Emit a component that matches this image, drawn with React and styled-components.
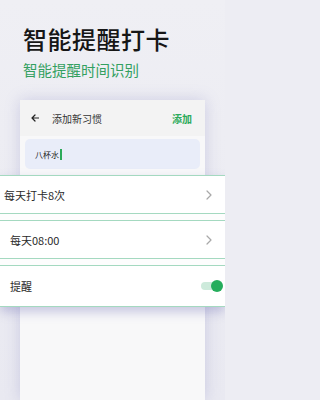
import React, { useState } from "react";
import styled, { createGlobalStyle } from "styled-components";

/* Base */
const GlobalStyle = createGlobalStyle`
  html, body {
    margin: 0;
    padding: 0;
    background: #ededf3;
  }
  body {
    font-family: "Noto Sans CJK SC", "Noto Sans", sans-serif;
  }
`;

const Page = styled.div`
  width: 225px;
  height: 400px;
  overflow: hidden;
  display: flex;
  flex-direction: column;
  background: linear-gradient(180deg, #efeff4 0%, #e9e9f1 100%);
`;

/* Hero text */
const Hero = styled.header`
  padding: 25px 0 0 23px;
`;

const Title = styled.h1`
  margin: 0;
  font-size: 24px;
  line-height: 28px;
  font-weight: 500;
  letter-spacing: 0.5px;
  color: #161616;
`;

const Subtitle = styled.p`
  margin: 8px 0 0;
  font-size: 14.5px;
  line-height: 18px;
  color: #33a060;
`;

/* Phone mock */
const Phone = styled.section`
  flex: 1;
  margin: 21px 20px 0;
  display: flex;
  flex-direction: column;
  background: #f8f8f9;
  box-shadow: 0 0 14px rgba(120, 120, 185, 0.28);
`;

const TopBar = styled.div`
  height: 36px;
  display: flex;
  align-items: center;
  padding: 0 13px 0 11px;
  background: #f3f3f3;
`;

const BarTitle = styled.span`
  flex: 1;
  margin-left: 13px;
  font-size: 10px;
  color: #333;
`;

const AddButton = styled.span`
  font-size: 10px;
  font-weight: 700;
  color: #2caa5a;
`;

const NameField = styled.div`
  height: 30px;
  margin: 3px 5px 0;
  padding: 0 10px;
  display: flex;
  align-items: center;
  border-radius: 5px;
  background: #e9edf9;
  font-size: 8px;
  color: #222;
`;

const Caret = styled.span`
  width: 1.5px;
  height: 11px;
  margin-left: 1px;
  background: #2caa5a;
`;

/* Settings list, wider than the phone */
const SettingList = styled.div`
  margin: 6px -20px 0;
  display: flex;
  flex-direction: column;
  gap: 6px;
  background: #fdfdfd;
  box-shadow: 0 5px 10px rgba(110, 110, 180, 0.35);
`;

const SettingRow = styled.div`
  height: ${(p) => p.$h}px;
  box-sizing: border-box;
  display: flex;
  align-items: center;
  padding: 0 13px 0 ${(p) => p.$indent}px;
  background: #fff;
  border-top: 1px solid #a4d9c0;
  border-bottom: 1px solid #a4d9c0;
  font-size: 11px;
  color: #2a2a2a;
`;

const RowLabel = styled.span`
  flex: 1;
`;

const Toggle = styled.button`
  position: relative;
  width: 21px;
  height: 8px;
  margin-right: -10px;
  padding: 0;
  border: none;
  border-radius: 4px;
  background: ${(p) => (p.$on ? "#cdeadb" : "#dddddd")};
  cursor: pointer;

  &::after {
    content: "";
    position: absolute;
    top: -2px;
    left: ${(p) => (p.$on ? "10px" : "-1px")};
    width: 12px;
    height: 12px;
    border-radius: 50%;
    background: ${(p) => (p.$on ? "#25ad5c" : "#f5f5f5")};
  }
`;

const Spacer = styled.div`
  flex: 1;
`;

/* Icons */
const BackArrow = () => (
  <svg width="8" height="8" viewBox="0 0 8 8" fill="none">
    <path
      d="M7.5 4H1M4 1L1 4l3 3"
      stroke="#222"
      strokeWidth="1.2"
      strokeLinecap="round"
      strokeLinejoin="round"
    />
  </svg>
);

const Chevron = () => (
  <svg width="6" height="10" viewBox="0 0 6 10" fill="none">
    <path
      d="M1 1l4 4-4 4"
      stroke="#a8a8a8"
      strokeWidth="1.2"
      strokeLinecap="round"
      strokeLinejoin="round"
    />
  </svg>
);

const App = () => {
  const [remind, setRemind] = useState(true);

  return (
    <>
      <GlobalStyle />
      <Page>
        <Hero>
          <Title>智能提醒打卡</Title>
          <Subtitle>智能提醒时间识别</Subtitle>
        </Hero>

        <Phone>
          <TopBar>
            <BackArrow />
            <BarTitle>添加新习惯</BarTitle>
            <AddButton>添加</AddButton>
          </TopBar>

          <NameField>
            八杯水
            <Caret />
          </NameField>

          <SettingList>
            <SettingRow $h={39} $indent={4}>
              <RowLabel>每天打卡8次</RowLabel>
              <Chevron />
            </SettingRow>
            <SettingRow $h={39} $indent={10}>
              <RowLabel>每天08:00</RowLabel>
              <Chevron />
            </SettingRow>
            <SettingRow $h={42} $indent={10}>
              <RowLabel>提醒</RowLabel>
              <Toggle $on={remind} onClick={() => setRemind(!remind)} />
            </SettingRow>
          </SettingList>

          <Spacer />
        </Phone>
      </Page>
    </>
  );
};

export default App;
